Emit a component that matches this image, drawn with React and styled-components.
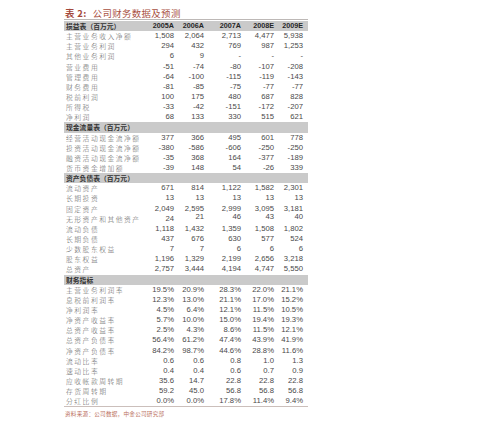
import React from "react";
import styled, { createGlobalStyle } from "styled-components";

const Global = createGlobalStyle`
  html, body { margin: 0; padding: 0; background: #ffffff; }
  #root { width: 500px; height: 423px; }
`;

const Page = styled.div`
  width: 500px;
  height: 423px;
  padding: 7px 0 0 64px;
  box-sizing: border-box;
  background: #fff;
`;

const Sheet = styled.div`
  width: 244px;
  display: flex;
  flex-direction: column;
`;

const Title = styled.div`
  font-family: "Noto Sans CJK SC", sans-serif;
  font-size: 9.4px;
  letter-spacing: 0.4px;
  line-height: 12px;
  height: 12px;
  color: #a8503f;
  padding-left: 1px;
  border-bottom: 1px solid #bdb8b6;
  white-space: nowrap;
  b { font-weight: 700; margin-right: 6px; color: #a3473a; }
`;

const Rows = styled.div`
  display: flex;
  flex-direction: column;
  padding-top: 1px;
`;

const Row = styled.div`
  display: grid;
  grid-template-columns: 82px 30px 30px 37px 33px 32px;
  height: 10.15px;
  align-items: center;
  background: ${(p) => (p.$band ? "#cacaca" : "transparent")};
`;

const Label = styled.div`
  font-family: "Noto Sans CJK SC", sans-serif;
  font-size: ${(p) => (p.$head ? "6.8px" : "6.8px")};
  letter-spacing: ${(p) => (p.$head ? "0px" : "1.5px")};
  font-weight: ${(p) => (p.$head ? 700 : 300)};
  color: ${(p) => (p.$head ? "#333333" : "#606060")};
  line-height: 10px;
  padding-left: 2px;
  white-space: nowrap;
`;

const Cell = styled.div`
  font-family: "Liberation Sans", Arial, sans-serif;
  font-size: ${(p) => (p.$head ? "7.2px" : "7.7px")};
  font-weight: ${(p) => (p.$head ? 700 : 400)};
  color: ${(p) => (p.$head ? "#262626" : "#4a4a4a")};
  text-align: right;
  line-height: 10px;
  padding-right: ${(p) => (p.$last ? "5px" : "2px")};
  white-space: nowrap;
  transform: translateY(${(p) => (p.$raise ? "-2px" : "0")});
`;

const Rule = styled.div`
  height: 1px;
  background: #cbbfbb;
`;

const Source = styled.div`
  font-family: "Noto Sans CJK SC", sans-serif;
  font-size: 5.6px;
  letter-spacing: 0.25px;
  color: #bb7060;
  padding: 3px 0 0 1px;
  white-space: nowrap;
`;

const years = ["2005A", "2006A", "2007A", "2008E", "2009E"];

const sections = [
  {
    head: "损益表（百万元）",
    years: true,
    rows: [
      ["主营业务收入净额", "1,508", "2,064", "2,713", "4,477", "5,938"],
      ["主营业务利润", "294", "432", "769", "987", "1,253"],
      ["其他业务利润", "6", "9", "-", "-", "-"],
      ["营业费用", "-51", "-74", "-80", "-107", "-208"],
      ["管理费用", "-64", "-100", "-115", "-119", "-143"],
      ["财务费用", "-81", "-85", "-75", "-77", "-77"],
      ["税前利润", "100", "175", "480", "687", "828"],
      ["所得税", "-33", "-42", "-151", "-172", "-207"],
      ["净利润", "68", "133", "330", "515", "621"],
    ],
  },
  {
    head: "现金流量表（百万元）",
    rows: [
      ["经营活动现金流净额", "377", "366", "495", "601", "778"],
      ["投资活动现金流净额", "-380", "-586", "-606", "-250", "-250"],
      ["融资活动现金流净额", "-35", "368", "164", "-377", "-189"],
      ["货币资金增加额", "-39", "148", "54", "-26", "339"],
    ],
  },
  {
    head: "资产负债表（百万元）",
    rows: [
      ["流动资产", "671", "814", "1,122", "1,582", "2,301"],
      ["长期投资", "13", "13", "13", "13", "13"],
      ["固定资产", "2,049", "2,595", "2,999", "3,095", "3,181"],
      ["无形资产和其他资产", "24", "21", "46", "43", "40", true],
      ["流动负债", "1,118", "1,432", "1,359", "1,508", "1,802"],
      ["长期负债", "437", "676", "630", "577", "524"],
      ["少数股东权益", "7", "7", "6", "6", "6"],
      ["股东权益", "1,196", "1,329", "2,199", "2,656", "3,218"],
      ["总资产", "2,757", "3,444", "4,194", "4,747", "5,550"],
    ],
  },
  {
    head: "财务指标",
    rows: [
      ["主营业务利润率", "19.5%", "20.9%", "28.3%", "22.0%", "21.1%"],
      ["息税前利润率", "12.3%", "13.0%", "21.1%", "17.0%", "15.2%"],
      ["净利润率", "4.5%", "6.4%", "12.1%", "11.5%", "10.5%"],
      ["净资产收益率", "5.7%", "10.0%", "15.0%", "19.4%", "19.3%"],
      ["总资产收益率", "2.5%", "4.3%", "8.6%", "11.5%", "12.1%"],
      ["总资产负债率", "56.4%", "61.2%", "47.4%", "43.9%", "41.9%"],
      ["净资产负债率", "84.2%", "98.7%", "44.6%", "28.8%", "11.6%"],
      ["流动比率", "0.6", "0.6", "0.8", "1.0", "1.3"],
      ["速动比率", "0.4", "0.4", "0.6", "0.7", "0.9"],
      ["应收帐款周转期", "35.6", "14.7", "22.8", "22.8", "22.8"],
      ["存货周转期", "59.2", "45.0", "56.8", "56.8", "56.8"],
      ["分红比例", "0.0%", "0.0%", "17.8%", "11.4%", "9.4%"],
    ],
  },
];

export default function App() {
  return (
    <>
      <Global />
      <Page>
        <Sheet>
          <Title>
            <b>表 2:</b>公司财务数据及预测
          </Title>
          <Rows>
            {sections.map((s) => (
              <React.Fragment key={s.head}>
                <Row $band>
                  <Label $head>{s.head}</Label>
                  {(s.years ? years : ["", "", "", "", ""]).map((y, i) => (
                    <Cell key={i} $head $last={i === 4}>
                      {y}
                    </Cell>
                  ))}
                </Row>
                {s.rows.map((r) => (
                  <Row key={r[0]}>
                    <Label>{r[0]}</Label>
                    {r.slice(1, 6).map((v, i) => (
                      <Cell key={i} $last={i === 4} $raise={r[6] && i > 0}>
                        {v}
                      </Cell>
                    ))}
                  </Row>
                ))}
              </React.Fragment>
            ))}
          </Rows>
          <Rule />
          <Source>资料来源：公司数据，中金公司研究部</Source>
        </Sheet>
      </Page>
    </>
  );
}
